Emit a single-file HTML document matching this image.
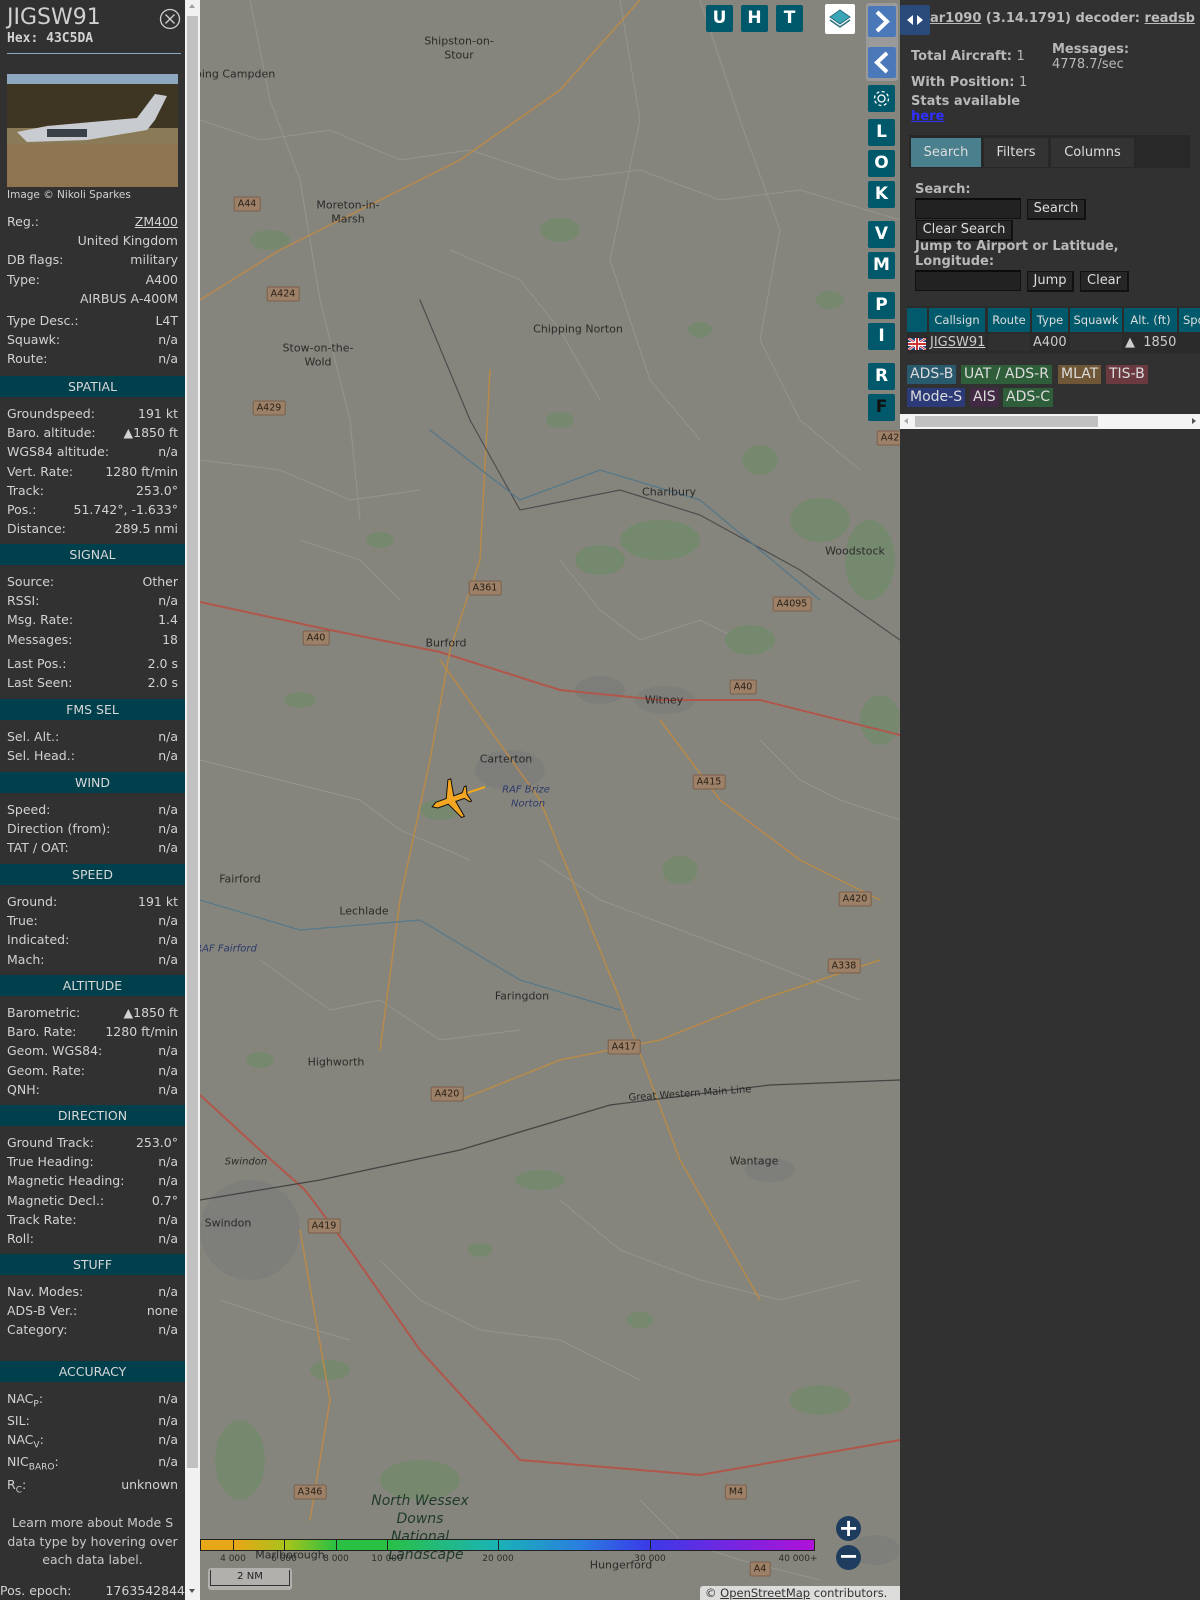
<!DOCTYPE html>
<html><head><meta charset="utf-8">
<style>
*{margin:0;padding:0;box-sizing:border-box}
body{width:1200px;height:1600px;overflow:hidden;background:#313131;font-family:"DejaVu Sans","Liberation Sans",sans-serif;position:relative}
#side{position:absolute;left:0;top:0;width:185px;height:1600px;background:#313131;color:#d2d2d2;font-size:12.5px}
#sb{position:absolute;left:185px;top:0;width:15px;height:1600px;background:#f1f1f1}
#sb .th{position:absolute;left:2px;top:16px;width:11px;height:1452px;background:#c1c1c1}
.a{position:absolute;left:0;width:185px}
.r{display:flex;justify-content:space-between;padding:0 7px;height:19.2px;line-height:19.2px;white-space:nowrap}
.r span:last-child{text-align:right}
.c{text-align:right;padding:0 7px;height:19.2px;line-height:19.2px}
.h{position:absolute;left:0;width:185px;height:21px;background:#003f4c;color:#d8d8d8;text-align:center;line-height:21px;font-size:12.5px}
#right{position:absolute;left:900px;top:0;width:300px;height:1600px;background:#313131;color:#b8b8b8;font-size:13px}
.b{font-weight:bold}
.mb{position:absolute;width:27px;height:27px;background:#00596b;color:#fff;font-weight:bold;font-size:17px;text-align:center;line-height:27px;border-radius:2px}
.lbl{position:absolute;font-family:"DejaVu Sans",sans-serif;font-size:11px;color:#2a2a2a;transform:translate(-50%,-50%);white-space:nowrap}
.rd{position:absolute;font-size:9.5px;color:#2a2016;background:#9c8068;border:1px solid #7a604a;border-radius:2px;padding:0 3px;transform:translate(-50%,-50%);line-height:13px}
.btn{position:absolute;background:#262626;border:1px solid #111;border-bottom:2px solid #111;border-right:2px solid #111;color:#ddd;font-size:13px;text-align:center;line-height:18px}
.inp{position:absolute;background:#222;border:1px solid #111;border-top:2px solid #0c0c0c}
.th2{position:absolute;top:308px;height:24px;background:#005a6b;color:#ddd;font-size:11.5px;text-align:center;line-height:24px}
.bd{position:absolute;height:19px;line-height:19px;font-size:14px;color:#ddd;padding:0 3px}
</style></head><body>

<!-- MAP -->
<svg style="position:absolute;left:200px;top:0" width="700" height="1600" viewBox="200 0 700 1600">
<rect x="200" y="0" width="700" height="1600" fill="#86857d"/>
<g fill="none" stroke="#96948c" stroke-width="1">
<path d="M200 120 L260 140 L330 130 L400 160 L470 150 L560 180 L640 170 L720 200 L800 190 L900 220"/>
<path d="M200 460 L280 470 L350 500 L420 490"/>
<path d="M250 0 L270 100 L300 180 L320 300 L350 420 L360 520"/>
<path d="M620 0 L640 120 L610 260 L650 380 L700 440"/>
<path d="M700 0 L740 120 L780 230 L760 340 L800 420 L860 470"/>
<path d="M200 760 L280 780 L360 800 L400 830 L470 860"/>
<path d="M540 860 L600 900 L680 930 L760 960 L860 1000"/>
<path d="M260 960 L330 1010 L380 1000 L440 1040 L520 1030"/>
<path d="M560 1200 L620 1250 L700 1280 L780 1300 L860 1280"/>
<path d="M380 1260 L420 1300 L480 1330 L560 1340 L640 1380"/>
<path d="M560 560 L600 610 L640 640 L700 620 L760 650"/>
<path d="M300 540 L360 560 L400 600"/>
<path d="M760 740 L800 780 L840 800 L900 820"/>
<path d="M220 1300 L280 1320 L350 1340"/>
<path d="M640 1500 L680 1540 L740 1560 L820 1580"/>
<path d="M450 250 L520 280 L560 330 L600 400"/>
</g>
<g fill="#728a6c" opacity="0.8">
<ellipse cx="660" cy="540" rx="40" ry="20"/><ellipse cx="600" cy="560" rx="25" ry="15"/>
<ellipse cx="820" cy="520" rx="30" ry="22"/><ellipse cx="870" cy="560" rx="25" ry="40"/>
<ellipse cx="880" cy="720" rx="20" ry="25"/><ellipse cx="750" cy="640" rx="25" ry="15"/>
<ellipse cx="680" cy="870" rx="18" ry="14"/><ellipse cx="440" cy="810" rx="20" ry="10"/>
<ellipse cx="270" cy="240" rx="20" ry="10"/><ellipse cx="560" cy="230" rx="20" ry="12"/>
<ellipse cx="540" cy="1180" rx="25" ry="10"/><ellipse cx="820" cy="1400" rx="30" ry="15"/>
<ellipse cx="420" cy="1480" rx="40" ry="20"/><ellipse cx="760" cy="460" rx="18" ry="15"/>
<ellipse cx="240" cy="1460" rx="25" ry="40"/><ellipse cx="330" cy="1370" rx="20" ry="10"/>
<ellipse cx="380" cy="540" rx="14" ry="8"/><ellipse cx="300" cy="700" rx="16" ry="8"/>
<ellipse cx="560" cy="420" rx="14" ry="8"/><ellipse cx="700" cy="330" rx="12" ry="8"/>
<ellipse cx="830" cy="300" rx="14" ry="9"/><ellipse cx="480" cy="1250" rx="12" ry="7"/>
<ellipse cx="640" cy="1320" rx="14" ry="8"/><ellipse cx="260" cy="1060" rx="14" ry="8"/>
</g>
<g fill="#7c7d7a" opacity="0.8">
<ellipse cx="665" cy="700" rx="30" ry="14"/><ellipse cx="510" cy="770" rx="35" ry="20"/>
<ellipse cx="250" cy="1230" rx="50" ry="50"/><ellipse cx="770" cy="1170" rx="25" ry="12"/>
<ellipse cx="600" cy="690" rx="25" ry="14"/><ellipse cx="875" cy="1550" rx="25" ry="15"/>
</g>
<g fill="none" stroke-linecap="round">
<path d="M200 602 L330 630 L440 652 L560 690 L660 700 L760 700 L900 735" stroke="#b0564a" stroke-width="2"/>
<path d="M200 1095 L260 1150 L305 1190 L350 1250 L420 1350 L520 1460 L700 1475 L900 1440" stroke="#b0564a" stroke-width="2"/>
<path d="M490 370 L480 560 L450 650 L430 760 L400 900 L380 1050" stroke="#b88a4a" stroke-width="1.5"/>
<path d="M200 300 L280 250 L360 210 L460 160 L560 90 L640 0" stroke="#b88a4a" stroke-width="1.5"/>
<path d="M440 660 L540 800 L620 1000 L680 1160 L760 1300" stroke="#b88a4a" stroke-width="1.5"/>
<path d="M660 720 L720 800 L800 860 L880 900" stroke="#b88a4a" stroke-width="1.5"/>
<path d="M460 1100 L560 1060 L660 1040 L760 1000 L880 960" stroke="#b88a4a" stroke-width="1.5"/>
<path d="M300 1230 L330 1400 L310 1520" stroke="#b88a4a" stroke-width="1.5"/>
<path d="M200 1200 L320 1180 L460 1150 L610 1105 L770 1085 L900 1080" stroke="#444" stroke-width="1.3"/>
<path d="M420 300 L470 420 L520 510 L620 490 L700 515 L800 570 L900 640" stroke="#4d4d50" stroke-width="1.2"/>
<path d="M430 430 L520 500 L600 470 L700 500 L820 600" stroke="#55788a" stroke-width="1.3"/>
<path d="M200 900 L300 930 L420 920 L520 980 L620 1010" stroke="#55788a" stroke-width="1.2"/>
</g>
<path d="M485 787 L455 797" stroke="#f0a820" stroke-width="2"/>
<g transform="translate(451,800) rotate(-110)" fill="#f5a623" stroke="#111" stroke-width="1">
<path d="M0 -20 L3 -15 L3 -4 L20 4 L20 7 L3 4 L3 13 L8 17 L8 19 L0 17 L-8 19 L-8 17 L-3 13 L-3 4 L-20 7 L-20 4 L-3 -4 L-3 -15 Z"/>
</g>
</svg>

<div class="lbl" style="left:459px;top:41px">Shipston-on-</div>
<div class="lbl" style="left:459px;top:55px">Stour</div>
<div class="lbl" style="left:230px;top:74px">ipping Campden</div>
<div class="lbl" style="left:348px;top:205px">Moreton-in-</div>
<div class="lbl" style="left:348px;top:219px">Marsh</div>
<div class="lbl" style="left:578px;top:329px">Chipping Norton</div>
<div class="lbl" style="left:318px;top:348px">Stow-on-the-</div>
<div class="lbl" style="left:318px;top:362px">Wold</div>
<div class="lbl" style="left:669px;top:492px">Charlbury</div>
<div class="lbl" style="left:855px;top:551px">Woodstock</div>
<div class="lbl" style="left:446px;top:643px">Burford</div>
<div class="lbl" style="left:664px;top:700px">Witney</div>
<div class="lbl" style="left:506px;top:759px">Carterton</div>
<div class="lbl" style="left:526px;top:790px;color:#2c3a6a;font-style:italic;font-size:10px">RAF Brize</div>
<div class="lbl" style="left:528px;top:804px;color:#2c3a6a;font-style:italic;font-size:10px">Norton</div>
<div class="lbl" style="left:240px;top:879px">Fairford</div>
<div class="lbl" style="left:226px;top:949px;color:#2c3a6a;font-style:italic;font-size:10px">RAF Fairford</div>
<div class="lbl" style="left:364px;top:911px">Lechlade</div>
<div class="lbl" style="left:522px;top:996px">Faringdon</div>
<div class="lbl" style="left:336px;top:1062px">Highworth</div>
<div class="lbl" style="left:754px;top:1161px">Wantage</div>
<div class="lbl" style="left:246px;top:1162px;font-style:italic;font-size:10px">Swindon</div>
<div class="lbl" style="left:228px;top:1223px">Swindon</div>
<div class="lbl" style="left:690px;top:1094px;font-size:10px;transform:translate(-50%,-50%) rotate(-4deg)">Great Western Main Line</div>
<div class="lbl" style="left:621px;top:1565px">Hungerford</div>
<div class="lbl" style="left:420px;top:1501px;font-style:italic;font-size:14px;color:#1f3a2a">North Wessex</div>
<div class="lbl" style="left:420px;top:1519px;font-style:italic;font-size:14px;color:#1f3a2a">Downs</div>
<div class="lbl" style="left:420px;top:1537px;font-style:italic;font-size:14px;color:#1f3a2a">National</div>
<div class="lbl" style="left:426px;top:1555px;font-style:italic;font-size:14px;color:#1f3a2a">Landscape</div>
<div class="lbl" style="left:290px;top:1555px">Marlborough</div>

<div class="rd" style="left:247px;top:204px">A44</div>
<div class="rd" style="left:283px;top:294px">A424</div>
<div class="rd" style="left:269px;top:408px">A429</div>
<div class="rd" style="left:485px;top:588px">A361</div>
<div class="rd" style="left:316px;top:638px">A40</div>
<div class="rd" style="left:792px;top:604px">A4095</div>
<div class="rd" style="left:743px;top:687px">A40</div>
<div class="rd" style="left:709px;top:782px">A415</div>
<div class="rd" style="left:855px;top:899px">A420</div>
<div class="rd" style="left:844px;top:966px">A338</div>
<div class="rd" style="left:624px;top:1047px">A417</div>
<div class="rd" style="left:447px;top:1094px">A420</div>
<div class="rd" style="left:324px;top:1226px">A419</div>
<div class="rd" style="left:310px;top:1492px">A346</div>
<div class="rd" style="left:736px;top:1492px">M4</div>
<div class="rd" style="left:760px;top:1569px">A4</div>
<div class="rd" style="left:890px;top:438px">A42</div>

<!-- map buttons -->
<div class="mb" style="left:706px;top:5px">U</div>
<div class="mb" style="left:741px;top:5px">H</div>
<div class="mb" style="left:776px;top:5px">T</div>
<div style="position:absolute;left:825px;top:4px;width:30px;height:30px;background:#fff;border-radius:2px"><svg width="30" height="30"><path d="M15 6 L25 13 L15 20 L5 13Z" fill="#3aa5b5" stroke="#2b6e7e"/><path d="M5 16 L15 23 L25 16" fill="none" stroke="#2b6e7e" stroke-width="1.5"/></svg></div>
<div style="position:absolute;left:866px;top:3px;width:32px;height:78px;background:#9a9a9a;border-radius:3px"></div>
<div style="position:absolute;left:868px;top:6px;width:28px;height:31px;background:#4a78b8;border-radius:2px"><svg width="28" height="31"><path d="M9 6 L19 15.5 L9 25" fill="none" stroke="#fff" stroke-width="4"/></svg></div>
<div style="position:absolute;left:868px;top:47px;width:28px;height:31px;background:#4a78b8;border-radius:2px"><svg width="28" height="31"><path d="M19 6 L9 15.5 L19 25" fill="none" stroke="#fff" stroke-width="4"/></svg></div>
<div class="mb" style="left:868px;top:85px"><svg width="27" height="27"><circle cx="13.5" cy="13.5" r="3.5" fill="none" stroke="#fff" stroke-width="1.3"/><circle cx="13.5" cy="13.5" r="7" fill="none" stroke="#fff" stroke-width="1.3" stroke-dasharray="3 2.5"/></svg></div>
<div class="mb" style="left:868px;top:119px">L</div>
<div class="mb" style="left:868px;top:150px">O</div>
<div class="mb" style="left:868px;top:181px">K</div>
<div class="mb" style="left:868px;top:221px">V</div>
<div class="mb" style="left:868px;top:252px">M</div>
<div class="mb" style="left:868px;top:292px">P</div>
<div class="mb" style="left:868px;top:323px">I</div>
<div class="mb" style="left:868px;top:363px">R</div>
<div class="mb" style="left:868px;top:394px;color:#111">F</div>

<!-- zoom -->
<div style="position:absolute;left:836px;top:1516px;width:25px;height:25px;border-radius:50%;background:#1e3d5e;color:#fff;font-size:24px;line-height:24px;text-align:center;font-weight:bold">+</div>
<div style="position:absolute;left:836px;top:1545px;width:25px;height:25px;border-radius:50%;background:#1e3d5e;color:#fff;font-size:24px;line-height:22px;text-align:center;font-weight:bold">−</div>

<!-- color bar -->
<div style="position:absolute;left:200px;top:1539px;width:615px;height:12px;border:1px solid #222;background:linear-gradient(to right,#e6a817 0%,#e6a817 6%,#a6c41a 14%,#2ac043 22%,#2ac043 30%,#1ab4b4 48%,#2a7ee0 62%,#3a3ae8 73%,#b012d8 100%)"></div>
<div style="position:absolute;top:1539px;left:233px;width:1px;height:12px;background:#222"></div>
<div style="position:absolute;top:1539px;left:284px;width:1px;height:12px;background:#222"></div>
<div style="position:absolute;top:1539px;left:336px;width:1px;height:12px;background:#222"></div>
<div style="position:absolute;top:1539px;left:387px;width:1px;height:12px;background:#222"></div>
<div style="position:absolute;top:1539px;left:498px;width:1px;height:12px;background:#222"></div>
<div style="position:absolute;top:1539px;left:650px;width:1px;height:12px;background:#222"></div>
<div class="lbl" style="left:233px;top:1559px;font-size:9px">4 000</div>
<div class="lbl" style="left:284px;top:1559px;font-size:9px">6 000</div>
<div class="lbl" style="left:336px;top:1559px;font-size:9px">8 000</div>
<div class="lbl" style="left:387px;top:1559px;font-size:9px">10 000</div>
<div class="lbl" style="left:498px;top:1559px;font-size:9px">20 000</div>
<div class="lbl" style="left:650px;top:1559px;font-size:9px">30 000</div>
<div class="lbl" style="left:798px;top:1559px;font-size:9px">40 000+</div>
<div style="position:absolute;left:208px;top:1568px;width:84px;height:22px;background:rgba(220,220,220,.5);border-radius:3px;padding:2px"><div style="border:1px solid #333;border-top:none;height:16px;font-size:10px;color:#222;text-align:center;line-height:14px">2 NM</div></div>
<div style="position:absolute;left:700px;top:1586px;width:200px;height:14px;background:rgba(235,235,235,.85);font-size:11.5px;color:#333;line-height:14px;padding-left:5px;border-top-left-radius:3px">© <u>OpenStreetMap</u> contributors.</div>

<!-- SIDEBAR -->
<div id="side">
<div style="position:absolute;left:7px;top:4px;font-size:22px;color:#d0d0d0;line-height:28px">JIGSW91</div>
<div style="position:absolute;left:7px;top:31px;font-family:'DejaVu Sans Mono',monospace;font-weight:bold;font-size:13px;line-height:16px">Hex: 43C5DA</div>
<svg style="position:absolute;left:159px;top:8px" width="22" height="22"><circle cx="11" cy="11" r="9.5" fill="none" stroke="#d0d0d0" stroke-width="1.3"/><path d="M6.5 6.5 L15.5 15.5 M15.5 6.5 L6.5 15.5" stroke="#d0d0d0" stroke-width="1.3"/></svg>
<div style="position:absolute;left:7px;top:53px;width:174px;height:1px;background:#8aa8c0"></div>
<svg style="position:absolute;left:7px;top:74px" width="171" height="113">
<rect width="171" height="14" fill="#8ea8c0"/><rect y="10" width="171" height="46" fill="#3e3522"/>
<rect y="54" width="171" height="16" fill="#8a7a58"/><rect y="70" width="171" height="43" fill="#8e7450"/>
<path d="M10 58 L40 52 L130 44 L148 20 L160 22 L148 46 L140 56 L80 66 L20 68 Z" fill="#c8ccd0"/>
<rect x="40" y="55" width="40" height="8" fill="#3a4048"/>
</svg>
<div style="position:absolute;left:7px;top:188px;font-size:10.5px;line-height:14px">Image © Nikoli Sparkes</div>

<div class="a" style="top:212px">
<div class="r"><span>Reg.:</span><span style="text-decoration:underline">ZM400</span></div>
<div class="c">United Kingdom</div>
<div class="r"><span>DB flags:</span><span>military</span></div>
<div class="r"><span>Type:</span><span>A400</span></div>
<div class="c">AIRBUS A-400M</div>
<div class="r" style="margin-top:3px"><span>Type Desc.:</span><span>L4T</span></div>
<div class="r"><span>Squawk:</span><span>n/a</span></div>
<div class="r"><span>Route:</span><span>n/a</span></div>
</div>
<div class="h" style="top:376px">SPATIAL</div>
<div class="a" style="top:404px">
<div class="r"><span>Groundspeed:</span><span>191 kt</span></div>
<div class="r"><span>Baro. altitude:</span><span>▲1850 ft</span></div>
<div class="r"><span>WGS84 altitude:</span><span>n/a</span></div>
<div class="r"><span>Vert. Rate:</span><span>1280 ft/min</span></div>
<div class="r"><span>Track:</span><span>253.0°</span></div>
<div class="r"><span>Pos.:</span><span>51.742°, -1.633°</span></div>
<div class="r"><span>Distance:</span><span>289.5 nmi</span></div>
</div>
<div class="h" style="top:544px">SIGNAL</div>
<div class="a" style="top:572px">
<div class="r"><span>Source:</span><span>Other</span></div>
<div class="r"><span>RSSI:</span><span>n/a</span></div>
<div class="r"><span>Msg. Rate:</span><span>1.4</span></div>
<div class="r"><span>Messages:</span><span>18</span></div>
<div class="r" style="margin-top:5px"><span>Last Pos.:</span><span>2.0 s</span></div>
<div class="r"><span>Last Seen:</span><span>2.0 s</span></div>
</div>
<div class="h" style="top:699px">FMS SEL</div>
<div class="a" style="top:727px">
<div class="r"><span>Sel. Alt.:</span><span>n/a</span></div>
<div class="r"><span>Sel. Head.:</span><span>n/a</span></div>
</div>
<div class="h" style="top:772px">WIND</div>
<div class="a" style="top:800px">
<div class="r"><span>Speed:</span><span>n/a</span></div>
<div class="r"><span>Direction (from):</span><span>n/a</span></div>
<div class="r"><span>TAT / OAT:</span><span>n/a</span></div>
</div>
<div class="h" style="top:864px">SPEED</div>
<div class="a" style="top:892px">
<div class="r"><span>Ground:</span><span>191 kt</span></div>
<div class="r"><span>True:</span><span>n/a</span></div>
<div class="r"><span>Indicated:</span><span>n/a</span></div>
<div class="r"><span>Mach:</span><span>n/a</span></div>
</div>
<div class="h" style="top:975px">ALTITUDE</div>
<div class="a" style="top:1003px">
<div class="r"><span>Barometric:</span><span>▲1850 ft</span></div>
<div class="r"><span>Baro. Rate:</span><span>1280 ft/min</span></div>
<div class="r"><span>Geom. WGS84:</span><span>n/a</span></div>
<div class="r"><span>Geom. Rate:</span><span>n/a</span></div>
<div class="r"><span>QNH:</span><span>n/a</span></div>
</div>
<div class="h" style="top:1105px">DIRECTION</div>
<div class="a" style="top:1133px">
<div class="r"><span>Ground Track:</span><span>253.0°</span></div>
<div class="r"><span>True Heading:</span><span>n/a</span></div>
<div class="r"><span>Magnetic Heading:</span><span>n/a</span></div>
<div class="r"><span>Magnetic Decl.:</span><span>0.7°</span></div>
<div class="r"><span>Track Rate:</span><span>n/a</span></div>
<div class="r"><span>Roll:</span><span>n/a</span></div>
</div>
<div class="h" style="top:1254px">STUFF</div>
<div class="a" style="top:1282px">
<div class="r"><span>Nav. Modes:</span><span>n/a</span></div>
<div class="r"><span>ADS-B Ver.:</span><span>none</span></div>
<div class="r"><span>Category:</span><span>n/a</span></div>
</div>
<div class="h" style="top:1361px">ACCURACY</div>
<div class="a" style="top:1389px">
<div class="r" style="height:22px"><span>NAC<sub style="font-size:9px">P</sub>:</span><span>n/a</span></div>
<div class="r"><span>SIL:</span><span>n/a</span></div>
<div class="r" style="height:22px"><span>NAC<sub style="font-size:9px">V</sub>:</span><span>n/a</span></div>
<div class="r" style="height:23px"><span>NIC<sub style="font-size:9px">BARO</sub>:</span><span>n/a</span></div>
<div class="r"><span>R<sub style="font-size:9px">C</sub>:</span><span>unknown</span></div>
</div>
<div class="a" style="top:1514px;text-align:center;line-height:18.7px;color:#c8c8c8">Learn more about Mode S<br>data type by hovering over<br>each data label.</div>
<div class="a" style="top:1581px"><div class="r" style="padding:0 0 0 0"><span>Pos. epoch:</span><span>1763542844</span></div></div>
</div>
<div id="sb"><div class="th"></div>
<div style="position:absolute;left:4px;top:4px;border:3.5px solid transparent;border-bottom:4px solid #a0a0a0;border-top:none"></div>
<div style="position:absolute;left:4px;top:1589px;border:3.5px solid transparent;border-top:4px solid #505050;border-bottom:none"></div>
</div>

<!-- RIGHT PANEL -->
<div id="right">
<div style="position:absolute;left:0;top:5px;width:30px;height:30px;background:#2a4a7a;border-radius:2px"><svg width="30" height="30"><path d="M13 10 L7 15 L13 20Z M17 10 L23 15 L17 20Z" fill="#fff"/></svg></div>
<div class="b" style="position:absolute;left:30px;top:11px;font-size:13px;color:#bbb;white-space:nowrap"><u>ar1090</u> (3.14.1791) decoder: <u>readsb</u></div>
<div class="b" style="position:absolute;left:11px;top:49px">Total Aircraft: <span style="font-weight:normal">1</span></div>
<div class="b" style="position:absolute;left:152px;top:42px">Messages:</div>
<div style="position:absolute;left:152px;top:57px">4778.7/sec</div>
<div class="b" style="position:absolute;left:11px;top:75px">With Position: <span style="font-weight:normal">1</span></div>
<div class="b" style="position:absolute;left:11px;top:94px">Stats available</div>
<div class="b" style="position:absolute;left:11px;top:109px;color:#3030ff;text-decoration:underline">here</div>
<div style="position:absolute;left:9px;top:135px;width:281px;height:33px;background:#282828"></div>
<div style="position:absolute;left:11px;top:138px;width:70px;height:29px;background:#4a7f8e;color:#ddd;text-align:center;line-height:29px">Search</div>
<div style="position:absolute;left:84px;top:138px;width:64px;height:29px;background:#333;color:#ddd;text-align:center;line-height:29px">Filters</div>
<div style="position:absolute;left:151px;top:138px;width:83px;height:29px;background:#333;color:#ddd;text-align:center;line-height:29px">Columns</div>
<div class="b" style="position:absolute;left:15px;top:182px">Search:</div>
<div class="inp" style="left:15px;top:198px;width:106px;height:21px"></div>
<div class="btn" style="left:127px;top:199px;width:59px;height:21px">Search</div>
<div class="btn" style="left:16px;top:220px;width:97px;height:21px">Clear Search</div>
<div class="b" style="position:absolute;left:15px;top:239px;line-height:15px">Jump to Airport or Latitude,<br>Longitude:</div>
<div class="inp" style="left:15px;top:270px;width:106px;height:21px"></div>
<div class="btn" style="left:127px;top:271px;width:47px;height:21px">Jump</div>
<div class="btn" style="left:180px;top:271px;width:49px;height:21px">Clear</div>
<div style="position:absolute;left:7px;top:306px;width:293px;height:48px;background:#2b2b2b"></div>
<div class="th2" style="left:7px;width:20px"></div>
<div class="th2" style="left:29px;width:56px">Callsign</div>
<div class="th2" style="left:88px;width:42px">Route</div>
<div class="th2" style="left:132px;width:36px">Type</div>
<div class="th2" style="left:170px;width:52px">Squawk</div>
<div class="th2" style="left:224px;width:53px">Alt. (ft)</div>
<div class="th2" style="left:279px;width:30px;text-align:left;padding-left:4px">Spd</div>
<div style="position:absolute;left:29px;top:334px;width:56px;height:17px;background:#303030"></div>
<div style="position:absolute;left:88px;top:334px;width:42px;height:17px;background:#303030"></div>
<div style="position:absolute;left:170px;top:334px;width:52px;height:17px;background:#303030"></div>
<svg style="position:absolute;left:8px;top:338px" width="18" height="12"><rect width="18" height="12" fill="#2a3f7a"/><path d="M0 0L18 12M18 0L0 12" stroke="#fff" stroke-width="2.5"/><path d="M0 0L18 12M18 0L0 12" stroke="#c33" stroke-width="1"/><path d="M9 0V12M0 6H18" stroke="#fff" stroke-width="4"/><path d="M9 0V12M0 6H18" stroke="#c33" stroke-width="2"/></svg>
<div style="position:absolute;left:30px;top:335px;color:#ccc;text-decoration:underline">JIGSW91</div>
<div style="position:absolute;left:133px;top:335px;color:#ccc">A400</div>
<div style="position:absolute;left:225px;top:335px;color:#ccc;white-space:nowrap">▲&nbsp;&nbsp;1850</div>
<div class="bd" style="left:7px;top:365px;background:#2a5a6e">ADS-B</div>
<div class="bd" style="left:61px;top:365px;background:#2e5e3a">UAT / ADS-R</div>
<div class="bd" style="left:158px;top:365px;background:#6e5636">MLAT</div>
<div class="bd" style="left:206px;top:365px;background:#6a3a40">TIS-B</div>
<div class="bd" style="left:7px;top:388px;background:#2c3a78">Mode-S</div>
<div class="bd" style="left:70px;top:388px;background:#432a44">AIS</div>
<div class="bd" style="left:103px;top:388px;background:#2e5e3a">ADS-C</div>
<div style="position:absolute;left:0;top:414px;width:300px;height:15px;background:#f4f4f4"></div>
<div style="position:absolute;left:15px;top:416px;width:183px;height:11px;background:#c1c1c1"></div>
<div style="position:absolute;left:4px;top:418px;border:3.5px solid transparent;border-right:4px solid #aaa;border-left:none"></div>
<div style="position:absolute;left:292px;top:418px;border:3.5px solid transparent;border-left:4px solid #505050;border-right:none"></div>
</div>
</body></html>
